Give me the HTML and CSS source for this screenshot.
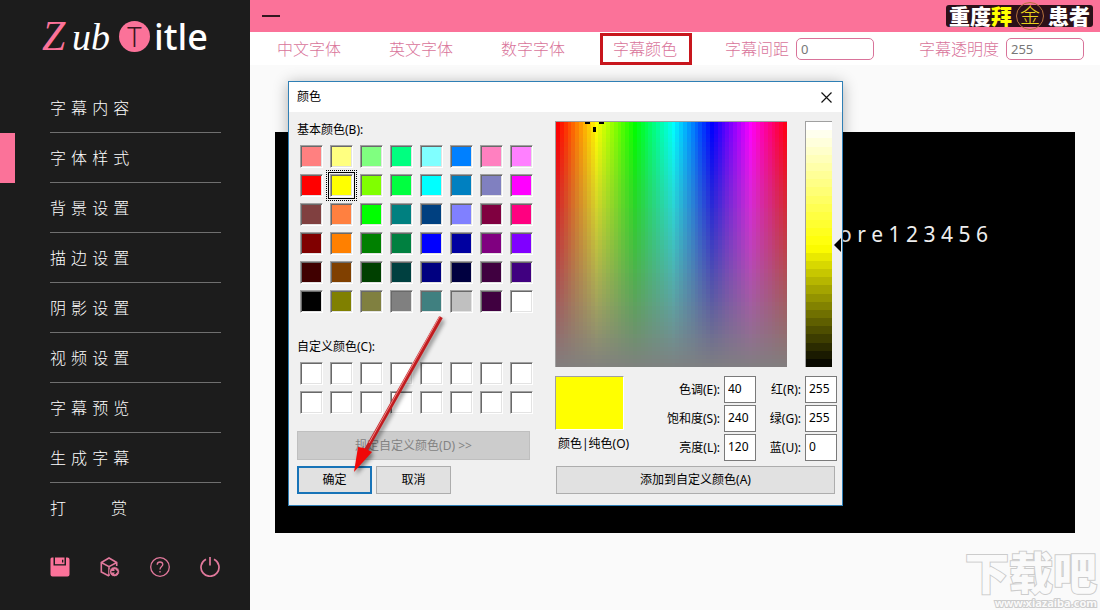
FILE: index.html
```html
<!DOCTYPE html>
<html lang="zh-CN">
<head>
<meta charset="utf-8">
<title>Zub Title</title>
<link rel="stylesheet" href="styles.css">
</head>
<body>
<div class="app">
  <aside class="sidebar">
    <h1 class="logo"><span class="logo-z">Z</span><span class="logo-ub">ub</span><span class="logo-t">T</span><span class="logo-itle">itle</span></h1>
    <nav class="nav">
      <a class="nav-item" href="#"><span class="nav-text">字 幕 内 容</span></a>
      <a class="nav-item active" href="#"><span class="nav-text">字 体 样 式</span></a>
      <a class="nav-item" href="#"><span class="nav-text">背 景 设 置</span></a>
      <a class="nav-item" href="#"><span class="nav-text">描 边 设 置</span></a>
      <a class="nav-item" href="#"><span class="nav-text">阴 影 设 置</span></a>
      <a class="nav-item" href="#"><span class="nav-text">视 频 设 置</span></a>
      <a class="nav-item" href="#"><span class="nav-text">字 幕 预 览</span></a>
      <a class="nav-item" href="#"><span class="nav-text">生 成 字 幕</span></a>
      <a class="nav-item" href="#"><span class="nav-text wide"><span>打</span><span>赏</span></span></a>
    </nav>
    <div class="tools">
      <button class="tool" aria-label="保存"><svg viewBox="0 0 20 20"><path d="M2 .5h1.500v8h12.500V.5H17.500q2 0 2 2v15q0 2-2 2H2.500q-2 0-2-2V2Q.5.5 2 .5z" fill="#fb7299"/><path d="M5 .5h9.500v6.700H5z" fill="#fb7299"/><path d="M12 2.800h1.300v2.700H12z" fill="#1c1c1c"/></svg></button>
      <button class="tool" aria-label="导出"><svg viewBox="0 0 20 20" fill="none" stroke="#e0789b" stroke-width="1.600"><path d="M9 19 1.300 15V5.500L9 1l7.700 4.500V9M1.300 5.500 9 9.700l7.700-4.200M9 9.700V19"/><circle cx="14.500" cy="14.700" r="5" fill="#e0789b" stroke="#1c1c1c" stroke-width=".8"/><path d="M11.500 14.700h5M14.500 12.500l2.200 2.200-2.200 2.200" stroke="#1c1c1c" stroke-width="1.400"/></svg></button>
      <button class="tool" aria-label="帮助"><svg viewBox="0 0 20 20" fill="none" stroke="#e0789b" stroke-width="1.300"><circle cx="10" cy="10" r="9.300"/><path d="M7.200 7.700Q7.300 5 10 5t2.800 2.500c0 2-2.800 2.300-2.800 5"/><path d="M10 14v1.500"/></svg></button>
      <button class="tool" aria-label="退出"><svg viewBox="0 0 20 20" fill="none" stroke="#e0789b" stroke-width="1.700"><path d="M6 2.200a9 9 0 1 0 8 0M10 0v8.500"/></svg></button>
    </div>
  </aside>

  <main class="main">
    <header class="titlebar">
      <button class="minimize" aria-label="最小化"></button>
      <div class="badge"><span>重度</span><span class="gold">拜</span><span class="coin">金</span><span>患者</span></div>
    </header>
    <div class="toolbar">
      <button class="tab">中文字体</button>
      <button class="tab">英文字体</button>
      <button class="tab">数字字体</button>
      <button class="tab marked">字幕颜色</button>
      <div class="fields">
        <label class="field">字幕间距<input type="text" value="0"></label>
        <label class="field">字幕透明度<input type="text" value="255"></label>
      </div>
    </div>
    <div class="workspace">
      <div class="stage">o r e 1 2 3 4 5 6</div>
    </div>
  </main>

  <section class="dialog" role="dialog" aria-labelledby="dlg-title">
    <header class="dialog-head">
      <h2 class="dialog-title" id="dlg-title">颜色</h2>
      <button class="close" aria-label="关闭"><svg viewBox="0 0 11 11"><path d="M.5.5l10 10M10.500.5l-10 10" stroke="#111" stroke-width="1.200"/></svg></button>
    </header>
    <div class="dialog-body">
      <div class="palette">
        <div class="caption">基本颜色(B):</div>
        <div class="swatches" id="basic"></div>
        <div class="caption custom-caption">自定义颜色(C):</div>
        <div class="swatches" id="custom"></div>
        <button class="btn define" disabled>规定自定义颜色(D) &gt;&gt;</button>
        <div class="actions">
          <button class="btn primary">确定</button>
          <button class="btn">取消</button>
        </div>
      </div>
      <div class="mixer">
        <div class="spectra">
          <canvas class="spectrum" id="spectrum" width="231" height="245"></canvas>
          <div class="lum-wrap">
            <canvas class="lum" id="lum" width="26" height="245"></canvas>
            <span class="lum-arrow"></span>
          </div>
        </div>
        <div class="values">
          <div class="current">
            <div class="chip"></div>
            <div class="chip-label">颜色|纯色(O)</div>
          </div>
          <div class="inputs">
            <label for="hue">色调(E):</label><input id="hue" type="text" value="40">
            <label for="red">红(R):</label><input id="red" type="text" value="255">
            <label for="sat">饱和度(S):</label><input id="sat" type="text" value="240">
            <label for="green">绿(G):</label><input id="green" type="text" value="255">
            <label for="light">亮度(L):</label><input id="light" type="text" value="120">
            <label for="blue">蓝(U):</label><input id="blue" type="text" value="0">
          </div>
        </div>
        <button class="btn add">添加到自定义颜色(A)</button>
      </div>
    </div>
  </section>

  <svg class="arrow" viewBox="0 0 100 170" aria-hidden="true">
    <path d="M91 7 16 140" stroke="#c11c1f" stroke-width="4"/>
    <path d="M90 6 19 133" stroke="#e88" stroke-width="1"/>
    <path d="M4 162 8 137l6 1 8 4z" fill="#f00808"/>
  </svg>

  <div class="watermark"><span class="wm-name">下载吧</span><span class="wm-url">www.xiazaiba.com</span></div>
</div>
<script src="script.js"></script>
</body>
</html>
```

FILE: styles.css
```css
* { box-sizing: border-box; }

body {
  margin: 0;
  font-family: "Noto Sans", "Noto Sans CJK SC", sans-serif;
  background: #fafafa;
}

button, input { font: inherit; }

.app {
  position: relative;
  display: flex;
  min-height: 100vh;
  overflow: hidden;
}

/* Sidebar */
.sidebar {
  flex: 0 0 250px;
  background: #1c1c1c;
  color: #fff;
}

.logo {
  display: flex;
  align-items: baseline;
  height: 83px;
  margin: 0;
  padding: 12px 0 0 42px;
  font-weight: 400;
  line-height: 48px;
}

.logo-z, .logo-ub {
  font-family: "Liberation Serif", serif;
  font-style: italic;
}

.logo-z { width: 30px; font-size: 42px; color: #fb7299; }
.logo-ub { width: 47px; font-size: 38px; }

.logo-t {
  align-self: flex-start;
  width: 31px;
  height: 31px;
  margin-top: 9px;
  border-radius: 50%;
  background: #fb7299;
  color: #3a1420;
  font-size: 27px;
  font-weight: 300;
  line-height: 31px;
  text-align: center;
}

.logo-itle { padding-left: 4px; font-size: 36px; font-weight: 500; }

.nav-item {
  display: block;
  height: 50px;
  padding: 0 29px 0 50px;
  color: #fff;
  text-decoration: none;
}

.nav-item.active {
  padding-left: 35px;
  border-left: 15px solid #fb7299;
}

.nav-text {
  display: block;
  height: 50px;
  border-bottom: 1px solid #6f6f6f;
  font-family: "DejaVu Sans", "Noto Sans CJK SC", sans-serif;
  font-size: 16px;
  font-weight: 300;
  line-height: 52px;
}

.nav-text.wide { display: flex; gap: 45px; border-bottom: 0; }

.tools {
  display: flex;
  gap: 30px;
  padding: 24px 0 0 50px;
}

.tool {
  width: 20px;
  height: 20px;
  padding: 0;
  border: 0;
  background: none;
}

.tool svg { display: block; }

/* Main area */
.main {
  flex: 1;
  display: flex;
  flex-direction: column;
  min-width: 0;
}

.titlebar {
  display: flex;
  align-items: center;
  justify-content: space-between;
  height: 32px;
  padding: 0 7px 0 12px;
  background: #fb7299;
}

.minimize {
  width: 18px;
  height: 2px;
  padding: 0;
  border: 0;
  background: #331820;
}

.badge {
  display: flex;
  align-items: center;
  height: 22px;
  padding: 0 3px;
  border-radius: 3px;
  background: #2b1019;
  color: #fff;
  font-size: 21px;
  font-weight: 900;
  line-height: 22px;
}

.gold { color: #ff0; }

.coin {
  width: 28px;
  height: 28px;
  margin: 0 4px;
  border: 1px solid #b5723c;
  border-radius: 50%;
  color: #e8d21c;
  font-size: 20px;
  font-weight: 300;
  line-height: 26px;
  text-align: center;
}

.toolbar {
  display: flex;
  align-items: center;
  gap: 48px;
  height: 33px;
  padding: 0 16px 0 27px;
  background: #fff;
  color: #d9739a;
  font-size: 16px;
  font-weight: 300;
}

.tab {
  position: relative;
  padding: 0;
  border: 0;
  background: none;
  color: inherit;
  line-height: 32px;
  white-space: nowrap;
}

.tab.marked::after {
  content: "";
  position: absolute;
  inset: 0 -15px 0 -13px;
  border: 3px solid #c8161d;
}

.fields {
  flex: 1;
  display: flex;
  justify-content: space-between;
}

.field {
  display: flex;
  align-items: center;
  gap: 7px;
  line-height: 22px;
  white-space: nowrap;
}

.field input {
  width: 78px;
  height: 22px;
  padding: 0 4px;
  border: 1px solid #d9739a;
  border-radius: 5px;
  background: #fff;
  color: #777;
  font-size: 13px;
  font-weight: 400;
}

.workspace {
  flex: 1;
  display: flex;
  padding: 67px 25px 77px;
}

.stage {
  flex: 1;
  padding: 87px 87px 0 0;
  background: #000;
  color: #eee;
  font-size: 21px;
  line-height: 30px;
  text-align: right;
}

/* Colour dialog */
.dialog {
  position: absolute;
  left: 288px;
  top: 81px;
  width: 555px;
  border: 1px solid #2f7fb5;
  background: #f0f0f0;
  box-shadow: 0 2px 14px rgba(0, 0, 0, .3);
  color: #000;
  font-size: 12px;
  line-height: 16px;
}

.dialog-head {
  display: flex;
  align-items: center;
  justify-content: space-between;
  height: 30px;
  padding: 0 10px 0 8px;
  background: #fff;
}

.dialog-title { margin: 0; font-size: 12px; font-weight: 400; }

.close {
  width: 11px;
  height: 11px;
  padding: 0;
  border: 0;
  background: none;
}

.close svg { display: block; }

.dialog-body {
  display: flex;
  gap: 25px;
  padding: 9px 5px 11px 8px;
}

.palette {
  flex: 0 0 233px;
  display: flex;
  flex-direction: column;
  min-width: 0;
}

.caption { line-height: 18px; }
.custom-caption { margin-top: 25px; }

.swatches {
  display: grid;
  grid-template-columns: repeat(8, 23px);
  grid-auto-rows: 23px;
  gap: 6px 7px;
  padding: 6px 0 0 3px;
}

.swatch {
  padding: 0;
  border: 1px solid;
  border-color: #a0a0a0 #fff #fff #a0a0a0;
  box-shadow: inset 1px 1px #696969, inset -1px -1px #e3e3e3;
}

.swatch.selected {
  position: relative;
  outline: 1px solid #000;
  outline-offset: 1px;
}

.swatch.selected::after {
  content: "";
  position: absolute;
  inset: -5px;
  border: 1px dotted #000;
}

.btn {
  height: 28px;
  padding: 0;
  border: 1px solid #adadad;
  background: #e1e1e1;
  color: #000;
  font-size: 12px;
}

.btn.define {
  height: 29px;
  margin: 17px 0 6px;
  border-color: #bfbfbf;
  background: #ccc;
  color: #838383;
}

.actions { display: flex; gap: 4px; }
.actions .btn { width: 75px; }
.btn.primary { border: 2px solid #1874b8; }

.mixer { flex: 1; }

.spectra { display: flex; gap: 18px; }

.spectrum, .lum {
  display: block;
  border: 1px solid #a0a0a0;
  border-right: 0;
  border-bottom: 0;
}

.lum-wrap { position: relative; }

.lum-arrow {
  position: absolute;
  left: 29px;
  top: 117px;
  border: 7px solid transparent;
  border-left: 0;
  border-right-color: #000;
}

.values {
  display: flex;
  justify-content: space-between;
  margin: 9px 0 5px;
}

.chip {
  width: 69px;
  height: 54px;
  border: 1px solid;
  border-color: #a0a0a0 #fff #fff #a0a0a0;
  background: #ff0;
}

.chip-label { margin-top: 6px; padding-left: 3px; white-space: nowrap; }

.inputs {
  display: grid;
  grid-template-columns: auto 32px 41px 32px;
  grid-auto-rows: 27px;
  gap: 2px 4px;
  align-items: center;
  text-align: right;
  white-space: nowrap;
}

.inputs input {
  width: 32px;
  height: 27px;
  padding: 0 0 2px 3px;
  border: 1px solid #7a7a7a;
  background: #fff;
  color: #000;
  font-size: 12px;
}

.btn.add { display: block; width: 279px; margin-left: 1px; }

/* Overlays */
.arrow {
  position: absolute;
  left: 350px;
  top: 310px;
  width: 100px;
  height: 170px;
  fill: none;
  filter: drop-shadow(2px 3px 2px rgba(0, 0, 0, .45));
}

.watermark {
  position: absolute;
  right: 3px;
  bottom: 0;
  display: flex;
  flex-direction: column;
  align-items: flex-end;
  color: #fafafa;
  font-weight: 900;
  paint-order: stroke fill;
  -webkit-text-stroke: 2px #ccc;
}

.wm-name { font-size: 44px; line-height: 44px; }
.wm-url { font-size: 11px; font-weight: 700; line-height: 15px; }
```

FILE: script.js
```js
const basic = [
  "#ff8080", "#ffff80", "#80ff80", "#00ff80", "#80ffff", "#0080ff", "#ff80c0", "#ff80ff",
  "#ff0000", "#ffff00", "#80ff00", "#00ff40", "#00ffff", "#0080c0", "#8080c0", "#ff00ff",
  "#804040", "#ff8040", "#00ff00", "#008080", "#004080", "#8080ff", "#800040", "#ff0080",
  "#800000", "#ff8000", "#008000", "#008040", "#0000ff", "#0000a0", "#800080", "#8000ff",
  "#400000", "#804000", "#004000", "#004040", "#000080", "#000040", "#400040", "#400080",
  "#000000", "#808000", "#808040", "#808080", "#408080", "#c0c0c0", "#400040", "#ffffff"
];

function fillSwatches(id, colors, selected) {
  const box = document.getElementById(id);
  colors.forEach((color, i) => {
    const b = document.createElement("button");
    b.className = i === selected ? "swatch selected" : "swatch";
    b.style.backgroundColor = color;
    b.setAttribute("aria-label", color);
    box.appendChild(b);
  });
}

fillSwatches("basic", basic, 9);
fillSwatches("custom", Array(16).fill("#ffffff"), -1);

// Hue across, saturation down, in a 60 x 60 grid of cells
const spectrum = document.getElementById("spectrum");
const s = spectrum.getContext("2d");
for (let x = 0; x < 60; x++) {
  for (let y = 0; y < 60; y++) {
    const left = Math.round(x * 231 / 60);
    const top = Math.round(y * 245 / 60);
    s.fillStyle = `hsl(${x * 6}, ${100 - y * 100 / 60}%, 50%)`;
    s.fillRect(left, top, 5, 5);
  }
}
s.fillStyle = "#000";
s.fillRect(29, 0, 5, 2);
s.fillRect(43, 0, 5, 2);
s.fillRect(37, 5, 3, 5);

// Luminance, white at the top to black at the bottom
const l = document.getElementById("lum").getContext("2d");
for (let i = 0; i < 30; i++) {
  l.fillStyle = `hsl(60, 100%, ${100 - i * 100 / 29.5}%)`;
  l.fillRect(0, Math.round(i * 245 / 30), 26, 9);
}
```
